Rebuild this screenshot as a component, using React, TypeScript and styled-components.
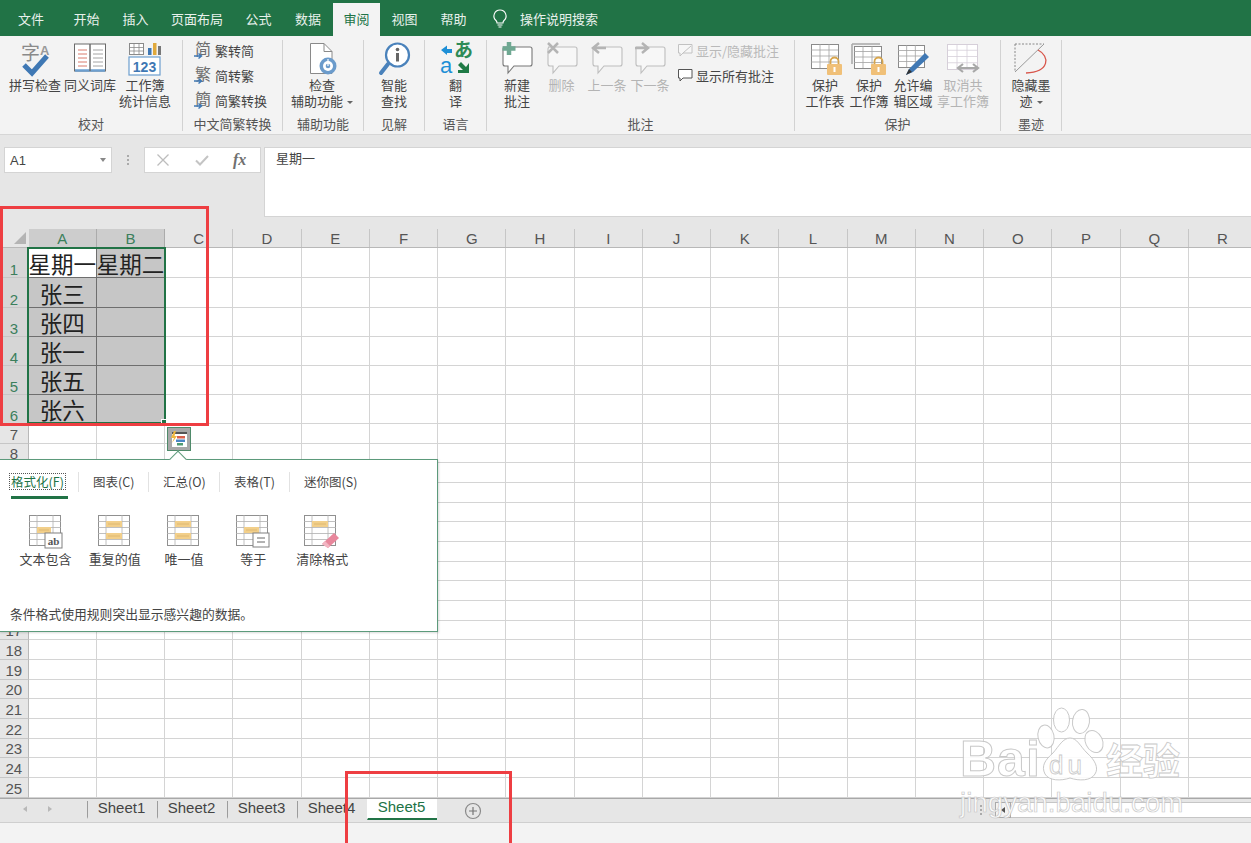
import React from 'react';
import styled, {createGlobalStyle} from 'styled-components';

const CJK = `"Noto Sans CJK SC", "Liberation Sans", sans-serif`;
const GREEN = '#217346';

const GlobalStyle = createGlobalStyle`
  html, body {
    margin: 0;
    padding: 0;
    background: #fff;
  }
  body {
    font-family: ${CJK};
    overflow: hidden;
  }
  svg {
    overflow: visible;
  }
`;

const Window = styled.div`
  position: relative;
  width: 1251px;
  height: 843px;
  overflow: hidden;
  display: flex;
  flex-direction: column;
`;

/* ---------- tabs ---------- */

const TabBar = styled.div`
  height: 36px;
  flex: none;
  background: ${GREEN};
  display: flex;
  align-items: flex-end;
  color: #fff;
  font-size: 13px;
`;

const MenuTab = styled.div<{$w: number; $active?: boolean}>`
  width: ${p => p.$w}px;
  height: 33px;
  flex: none;
  display: flex;
  align-items: center;
  justify-content: center;
  padding-bottom: 3px;
  box-sizing: border-box;
  background: ${p => (p.$active ? '#f3f3f3' : 'transparent')};
  color: ${p => (p.$active ? GREEN : '#e8f1ec')};
`;

const SearchHint = styled.div`
  margin-left: 15px;
  height: 33px;
  display: flex;
  align-items: center;
  gap: 13px;
  padding-bottom: 3px;
  box-sizing: border-box;
  color: #e8f1ec;
`;

/* ---------- ribbon ---------- */

const Ribbon = styled.div`
  height: 99px;
  flex: none;
  background: #f3f3f3;
  border-bottom: 1px solid #d6d6d6;
  box-sizing: border-box;
  display: flex;
  padding-top: 4px;
  color: #444;
  font-size: 13px;
`;

const Group = styled.div<{$w: number}>`
  width: ${p => p.$w}px;
  height: 91px;
  flex: none;
  box-sizing: border-box;
  border-right: 1px solid #d2d2d2;
  display: flex;
  flex-direction: column;
`;

const GroupBody = styled.div<{$pad?: number}>`
  height: 76px;
  flex: none;
  display: flex;
  padding-left: ${p => p.$pad || 0}px;
`;

const GroupLabel = styled.div`
  height: 15px;
  line-height: 16px;
  text-align: center;
  color: #555;
  font-size: 13px;
  white-space: nowrap;
`;

const BigButton = styled.div<{$w: number; $off?: boolean}>`
  width: ${p => p.$w}px;
  flex: none;
  display: flex;
  flex-direction: column;
  align-items: center;
  color: ${p => (p.$off ? '#b4b4b4' : '#444')};
`;

const BigIcon = styled.div`
  height: 37px;
  padding-top: 2px;
  box-sizing: border-box;
  display: flex;
  align-items: flex-start;
  justify-content: center;
`;

const BigText = styled.div`
  line-height: 16px;
  text-align: center;
  white-space: nowrap;
`;

const SmallStack = styled.div<{$w: number; $gap: number; $ml?: number}>`
  width: ${p => p.$w}px;
  flex: none;
  display: flex;
  flex-direction: column;
  gap: ${p => p.$gap}px;
  margin-left: ${p => p.$ml || 0}px;
`;

const SmallButton = styled.div<{$off?: boolean}>`
  display: flex;
  align-items: center;
  gap: 2px;
  height: 20px;
  white-space: nowrap;
  font-size: 13px;
  color: ${p => (p.$off ? '#b9b9b9' : '#444')};
`;

const Caret = styled.span`
  display: inline-block;
  width: 0;
  height: 0;
  margin-left: 4px;
  vertical-align: middle;
  border-left: 3px solid transparent;
  border-right: 3px solid transparent;
  border-top: 3px solid #666;
`;

/* ---------- formula bar ---------- */

const FormulaArea = styled.div`
  height: 94px;
  flex: none;
  box-sizing: border-box;
  background: #e6e6e6;
  padding: 12px 0 12px 4px;
  display: flex;
  align-items: flex-start;
`;

const NameBox = styled.div`
  width: 108px;
  height: 26px;
  flex: none;
  box-sizing: border-box;
  background: #fff;
  border: 1px solid #d4d4d4;
  display: flex;
  align-items: center;
  justify-content: space-between;
  padding: 0 5px;
  font-family: "Liberation Sans", sans-serif;
  font-size: 13px;
  color: #444;
`;

const DownArrow = styled.span`
  width: 0;
  height: 0;
  border-left: 3px solid transparent;
  border-right: 3px solid transparent;
  border-top: 4px solid #888;
`;

const Grip = styled.div<{$w: number}>`
  width: ${p => p.$w}px;
  height: 26px;
  flex: none;
  display: flex;
  flex-direction: column;
  align-items: center;
  justify-content: center;
  gap: 2px;
`;

const GripDot = styled.i`
  width: 2px;
  height: 2px;
  background: #aaa;
`;

const FnBox = styled.div`
  width: 117px;
  height: 26px;
  flex: none;
  box-sizing: border-box;
  background: #fff;
  border: 1px solid #d4d4d4;
  display: flex;
  align-items: center;
  gap: 23px;
  padding-left: 10px;
`;

const Fx = styled.span`
  font-family: "Liberation Serif", serif;
  font-style: italic;
  font-weight: bold;
  font-size: 16px;
  color: #707070;
`;

const FormulaInput = styled.div`
  margin-left: 3px;
  flex: 1;
  height: 70px;
  box-sizing: border-box;
  background: #fff;
  border-left: 1px solid #d4d4d4;
  border-top: 1px solid #d4d4d4;
  border-bottom: 1px solid #d4d4d4;
  padding: 0 11px;
  font-size: 13px;
  line-height: 20px;
  color: #444;
`;

/* ---------- sheet ---------- */

const Sheet = styled.div`
  position: relative;
  height: 569px;
  flex: none;
  overflow: hidden;
  background: #fff;
`;

const HeaderRow = styled.div`
  height: 19px;
  display: flex;
  background: #e6e6e6;
  border-bottom: 1px solid #b8b8b8;
  box-sizing: border-box;
`;

const Corner = styled.div`
  width: 28.6px;
  flex: none;
  position: relative;
  box-sizing: border-box;
  &::after {
    content: '';
    position: absolute;
    right: 3px;
    bottom: 3px;
    width: 0;
    height: 0;
    border-left: 12px solid transparent;
    border-bottom: 12px solid #b4b4b4;
  }
`;

const ColHead = styled.div<{$sel?: boolean}>`
  width: 68.25px;
  flex: none;
  box-sizing: border-box;
  display: flex;
  align-items: center;
  justify-content: center;
  font-family: "Liberation Sans", sans-serif;
  font-size: 15px;
  color: ${p => (p.$sel ? '#3b7f5c' : '#555')};
  background: ${p => (p.$sel ? '#cdcdcd' : 'transparent')};
  border-right: 1px solid ${p => (p.$sel ? '#ababab' : '#c6c6c6')};
`;

const Row = styled.div<{$h: number}>`
  height: ${p => p.$h}px;
  display: flex;
`;

const RowHead = styled.div<{$sel?: boolean}>`
  width: 28.6px;
  flex: none;
  box-sizing: border-box;
  display: flex;
  align-items: flex-end;
  justify-content: center;
  font-family: "Liberation Sans", sans-serif;
  font-size: 15px;
  line-height: ${p => (p.$sel ? 15 : 17)}px;
  color: ${p => (p.$sel ? '#3b7f5c' : '#555')};
  background: ${p => (p.$sel ? '#d6d6d6' : '#e6e6e6')};
  border-bottom: 1px solid #c6c6c6;
  border-right: 1px solid #b8b8b8;
`;

const Cell = styled.div<{$sel?: boolean; $anchor?: boolean}>`
  width: 68.25px;
  flex: none;
  box-sizing: border-box;
  display: flex;
  align-items: center;
  justify-content: center;
  overflow: visible;
  white-space: nowrap;
  font-size: 22.5px;
  line-height: 26px;
  color: #222;
  background: ${p => (p.$anchor ? '#fff' : p.$sel ? '#c6c6c6' : '#fff')};
  border-right: 1px solid ${p => (p.$sel ? '#6e6e6e' : '#d4d4d4')};
  border-bottom: 1px solid ${p => (p.$sel ? '#6e6e6e' : '#d4d4d4')};
`;

const SelectionFrame = styled.div`
  position: absolute;
  left: 27px;
  top: 18px;
  width: 139px;
  height: 177px;
  box-sizing: border-box;
  border: 2px solid ${GREEN};
  pointer-events: none;
  &::after {
    content: '';
    position: absolute;
    right: -3px;
    bottom: -3px;
    width: 4px;
    height: 4px;
    background: ${GREEN};
    border: 1px solid #fff;
  }
`;

const QuickButton = styled.div`
  position: absolute;
  left: 167px;
  top: 198px;
  width: 24px;
  height: 24px;
  box-sizing: border-box;
  background: #a8a8a8;
  border: 1px solid #4f8a6a;
  display: flex;
  align-items: center;
  justify-content: center;
`;

/* ---------- quick analysis ---------- */

const Popup = styled.div`
  position: absolute;
  left: -1px;
  top: 230px;
  width: 439px;
  height: 173px;
  box-sizing: border-box;
  background: #fff;
  border: 1px solid #5c9a7b;
  box-shadow: 1px 1px 2px rgba(0, 0, 0, 0.15);
  padding: 9px 0 0 11px;
  color: #444;
  font-size: 12.5px;
  &::before {
    content: '';
    position: absolute;
    left: 172px;
    top: -7px;
    width: 11px;
    height: 11px;
    background: #fff;
    border-left: 1px solid #5c9a7b;
    border-top: 1px solid #5c9a7b;
    transform: rotate(45deg);
  }
`;

const PopTabs = styled.div`
  display: flex;
  height: 27px;
`;

const PopTab = styled.div<{$w: number; $active?: boolean}>`
  width: ${p => p.$w}px;
  flex: none;
  box-sizing: border-box;
  height: 24px;
  display: flex;
  align-items: center;
  position: relative;
  white-space: nowrap;
  color: ${p => (p.$active ? GREEN : '#444')};
  &:not(:first-child)::before {
    content: '';
    position: absolute;
    left: -15px;
    top: 3px;
    bottom: 1px;
    width: 1px;
    background: #e2e2e2;
  }
`;

const FocusLabel = styled.span`
  outline: 1px dotted #555;
  line-height: 15px;
  padding: 0 1px;
  margin-left: -1px;
`;

const ActiveBar = styled.div`
  width: 57px;
  height: 3px;
  background: ${GREEN};
`;

const PopItems = styled.div`
  display: flex;
  margin-top: 16px;
  height: 62px;
`;

const PopItem = styled.div`
  width: 69.2px;
  flex: none;
  display: flex;
  flex-direction: column;
  align-items: center;
  white-space: nowrap;
  line-height: 16px;
  font-size: 13px;
  gap: 2px;
`;

const PopNote = styled.div`
  position: absolute;
  left: 10px;
  top: 145px;
  line-height: 18px;
  font-size: 12.8px;
  white-space: nowrap;
`;

/* ---------- sheet tabs and status ---------- */

const TabsBar = styled.div`
  height: 25px;
  flex: none;
  box-sizing: border-box;
  background: #e6e6e6;
  border-top: 1px solid #a8a8a8;
  border-bottom: 1px solid #cfcfcf;
  display: flex;
  align-items: flex-start;
  font-family: "Liberation Sans", sans-serif;
  font-size: 15px;
  color: #444;
`;

const NavArrows = styled.div`
  width: 87px;
  height: 20px;
  flex: none;
  display: flex;
  align-items: center;
  gap: 21px;
  padding-left: 23px;
  box-sizing: border-box;
`;

const NavArrow = styled.span<{$flip?: boolean; $dark?: boolean}>`
  width: 0;
  height: 0;
  border-top: 3.5px solid transparent;
  border-bottom: 3.5px solid transparent;
  ${p => (p.$flip ? 'border-left: 4px solid #b8b8b8;' : `border-right: 4px solid ${p.$dark ? '#555' : '#b8b8b8'};`)}
`;

const SheetTab = styled.div<{$active?: boolean}>`
  width: 70px;
  flex: none;
  box-sizing: border-box;
  display: flex;
  align-items: center;
  justify-content: center;
  padding: 0 2px 4px 0;
  background: ${p => (p.$active ? '#fff' : 'transparent')};
  color: ${p => (p.$active ? GREEN : '#444')};
  border-left: 1px solid ${p => (p.$active ? 'transparent' : '#9c9c9c')};
  border-bottom: 2px solid ${p => (p.$active ? GREEN : 'transparent')};
  height: ${p => (p.$active ? 21 : 18)}px;
  margin-top: ${p => (p.$active ? 0 : 2)}px;
`;

const AddSheet = styled.div`
  margin-left: 27px;
  margin-top: 3px;
  flex: none;
  display: flex;
`;

const TabsRight = styled.div`
  margin-left: auto;
  display: flex;
  align-items: center;
  height: 21px;
`;

const ScrollStart = styled.div`
  margin-left: 12px;
  width: 16px;
  height: 16px;
  box-sizing: border-box;
  background: #f3f3f3;
  border: 1px solid #aaa;
  display: flex;
  align-items: center;
  justify-content: center;
`;

const ScrollTrack = styled.div`
  width: 240px;
  height: 16px;
  box-sizing: border-box;
  background: #fff;
  border-top: 1px solid #c6c6c6;
  border-bottom: 1px solid #c6c6c6;
`;

const StatusBar = styled.div`
  height: 20px;
  flex: none;
  background: #f3f3f3;
`;

/* ---------- overlays ---------- */

const RedBox = styled.div<{$x: number; $y: number; $w: number; $h: number}>`
  position: absolute;
  left: ${p => p.$x}px;
  top: ${p => p.$y}px;
  width: ${p => p.$w}px;
  height: ${p => p.$h}px;
  box-sizing: border-box;
  border: 3px solid #ee3e42;
  pointer-events: none;
`;

const Watermark = styled.div`
  position: absolute;
  left: 960px;
  top: 708px;
  width: 225px;
  height: 108px;
  pointer-events: none;
  color: #fff;
  opacity: 0.9;
  font-family: "Liberation Sans", sans-serif;
`;

const WmBai = styled.span`
  position: absolute;
  left: 0;
  top: 26px;
  font-size: 50px;
  line-height: 50px;
  font-weight: bold;
  letter-spacing: 1px;
  -webkit-text-stroke: 1px #c4c4c4;
`;

const WmDu = styled.span`
  position: absolute;
  left: 89px;
  top: 44px;
  font-size: 26px;
  line-height: 26px;
  letter-spacing: 4px;
  color: #fff;
  -webkit-text-stroke: 0.8px #c4c4c4;
`;

const WmJy = styled.span`
  position: absolute;
  left: 146px;
  top: 29px;
  font-family: ${CJK};
  font-size: 37px;
  line-height: 44px;
  font-weight: bold;
  -webkit-text-stroke: 0.8px #c4c4c4;
`;

const WmUrl = styled.span`
  position: absolute;
  left: 0;
  top: 80px;
  font-size: 27.5px;
  line-height: 30px;
  letter-spacing: 0.1px;
  white-space: nowrap;
  -webkit-text-stroke: 0.7px #c4c4c4;
`;

const WmPaw = styled.svg`
  position: absolute;
  left: 75px;
  top: 0;
`;

/* ---------- icons ---------- */

const SpellIcon = () => (
  <svg width="34" height="34" viewBox="0 0 34 34">
    <text x="3" y="18" fontSize="19" fill="#8a8a8a" fontFamily={CJK}>字</text>
    <text x="22" y="13" fontSize="13" fontWeight="bold" fill="#9a9a9a" fontFamily="Liberation Sans">A</text>
    <path d="M6 23 L14 31 L29 14" fill="none" stroke="#3f78b4" strokeWidth="5" />
  </svg>
);

const BookIcon = () => (
  <svg width="34" height="32" viewBox="0 0 34 32">
    <rect x="1.5" y="2" width="31" height="27" fill="#fff" stroke="#6a6a6a" />
    <path d="M2 28.5 H32" stroke="#6d9fcf" strokeWidth="2.5" />
    <path d="M17 2 V29" stroke="#6d6d6d" strokeWidth="1.5" />
    <path d="M5 8 H14 M5 12 H14 M5 16 H14 M5 20 H14 M5 24 H14" stroke="#d97a6c" strokeWidth="1" />
    <path d="M20 8 H30 M20 12 H30 M20 16 H30 M20 20 H30 M20 24 H30" stroke="#a4a4a4" strokeWidth="1" />
  </svg>
);

const StatsIcon = () => (
  <svg width="34" height="34" viewBox="0 0 34 34">
    <rect x="1.5" y="1.5" width="14" height="11" fill="#fff" stroke="#8a8a8a" />
    <path d="M1.5 5.5 H15.5 M1.5 9 H15.5 M6 1.5 V12.5 M11 1.5 V12.5" stroke="#8a8a8a" strokeWidth="0.8" />
    <rect x="20" y="6" width="3.5" height="7" fill="#3f78b4" />
    <rect x="25" y="1" width="3.5" height="12" fill="#e0a93c" />
    <rect x="30" y="4" width="3" height="9" fill="#777" />
    <rect x="1" y="15" width="31" height="18" fill="#fff" stroke="#6d9fcf" strokeWidth="1.2" />
    <text x="16.5" y="29.5" fontSize="14" fontWeight="bold" textAnchor="middle" fill="#3f78b4" fontFamily="Liberation Sans">123</text>
  </svg>
);

const ConvertGlyph = ({ch}: {ch: string}) => (
  <svg width="20" height="22" viewBox="0 0 20 22">
    <text x="2" y="16" fontSize="16" fill="#6e6e6e" fontFamily={CJK}>{ch}</text>
    <path d="M1 17 H8 M5.5 14.5 L8.5 17 L5.5 19.5" fill="none" stroke="#3f78b4" strokeWidth="1.5" />
  </svg>
);

const AccessIcon = () => (
  <svg width="30" height="35" viewBox="0 0 30 35">
    <path d="M3.5 1.5 H17 L25 9.5 V31.5 H3.5 Z" fill="#fff" stroke="#8a8a8a" />
    <path d="M17 1.5 V9.5 H25" fill="none" stroke="#8a8a8a" />
    <circle cx="21" cy="24" r="8.5" fill="#6b9bcb" />
    <circle cx="21" cy="24" r="5" fill="#fff" />
    <circle cx="21" cy="24" r="2.3" fill="#6b9bcb" />
    <path d="M21 17 V24" stroke="#fff" strokeWidth="1.2" />
  </svg>
);

const SmartIcon = () => (
  <svg width="34" height="34" viewBox="0 0 34 34">
    <circle cx="20.5" cy="13" r="11.5" fill="#fff" stroke="#4a82bb" strokeWidth="2.2" />
    <path d="M11 22 L4 31" stroke="#4a82bb" strokeWidth="4" strokeLinecap="round" />
    <circle cx="20.5" cy="7.5" r="1.8" fill="#666" />
    <path d="M20.5 11 V19.5" stroke="#666" strokeWidth="3" />
  </svg>
);

const TranslateIcon = () => (
  <svg width="32" height="34" viewBox="0 0 32 34">
    <path d="M1 8 L7 3.5 L7 7 L12 7 L12 11 L7 11 L7 13 L1 8 Z" fill="#1e8fd6" />
    <text x="14" y="15" fontSize="19" fontWeight="bold" fill="#2e8b57" fontFamily={CJK}>あ</text>
    <text x="0" y="31" fontSize="22" fill="#1e8fd6" fontFamily="Liberation Sans">a</text>
    <path d="M29 31 L18 31 L18 28 L23 28 L18 23 L21 20 L26 25 L29 21 Z" fill="#1f7a45" />
  </svg>
);

const Bubble = ({dim, children}: {dim?: boolean; children?: React.ReactNode}) => {
  const c = dim ? '#bdbdbd' : '#777';
  return (
    <svg width="34" height="34" viewBox="0 0 34 34">
      <path d="M3 5 H30 Q32 5 32 7 V22 Q32 24 30 24 H14 L8 31 V24 H5 Q3 24 3 22 V7 Q3 5 5 5 Z" fill={dim ? '#f7f7f7' : '#fff'} stroke={c} strokeWidth="1.1" />
      {children}
    </svg>
  );
};

const SmallBubble = ({dim}: {dim?: boolean}) => (
  <svg width="17" height="16" viewBox="0 0 17 16">
    <path d="M1.5 2.5 H15 V11 H6 L3 14 V11 H1.5 Z" fill={dim ? '#f7f7f7' : '#fff'} stroke={dim ? '#c2c2c2' : '#555'} />
    {dim && <path d="M6 11 L14 4" stroke="#c2c2c2" />}
  </svg>
);

const GridSheet = ({w, h, dim}: {w: number; h: number; dim?: boolean}) => {
  const c = dim ? '#d6cfd9' : '#a2a2a2';
  const lines = [];
  for (let x = w / 3; x < w - 1; x += w / 3) lines.push(`M${x} 0 V${h}`);
  for (let y = h / 4; y < h - 1; y += h / 4) lines.push(`M0 ${y} H${w}`);
  return (
    <g>
      <rect x="0.5" y="0.5" width={w} height={h} fill="#fff" stroke={dim ? c : '#8a8a8a'} />
      <path d={lines.join(' ')} stroke={c} strokeWidth="0.8" fill="none" />
    </g>
  );
};

const Lock = ({x, y}: {x: number; y: number}) => (
  <g transform={`translate(${x} ${y})`}>
    <path d="M3.5 7 V4.5 A4 4 0 0 1 11.5 4.5 V7" fill="none" stroke="#d8a64e" strokeWidth="1.8" />
    <rect x="0" y="7" width="15" height="11" rx="1" fill="#f0c078" />
    <rect x="6.5" y="10" width="2" height="5" fill="#fff" />
  </g>
);

const ProtectSheetIcon = () => (
  <svg width="36" height="34" viewBox="0 0 36 34">
    <g transform="translate(4 2)"><GridSheet w={27} h={24} /></g>
    <Lock x={20} y={15} />
  </svg>
);

const ProtectBookIcon = () => (
  <svg width="36" height="34" viewBox="0 0 36 34">
    <path d="M1 2 H29 M1 2 V22" stroke="#a8a8a8" strokeWidth="1.5" fill="none" />
    <g transform="translate(3 4)"><GridSheet w={27} h={22} /></g>
    <Lock x={20} y={15} />
  </svg>
);

const AllowEditIcon = () => (
  <svg width="36" height="34" viewBox="0 0 36 34">
    <g transform="translate(3 3)"><GridSheet w={26} h={22} /></g>
    <path d="M11 33 L14 27 L30 11 L34 15 L18 30 Z" fill="#3f78b4" />
    <path d="M11 33 L14 27 L17 30 Z" fill="#333" />
  </svg>
);

const UnshareIcon = () => (
  <svg width="36" height="34" viewBox="0 0 36 34">
    <g transform="translate(2 2)"><GridSheet w={30} h={25} dim /></g>
    <path d="M13 26 H33 M18 22 L13 26 L18 30 M28 22 L33 26 L28 30" fill="none" stroke="#a8a8a8" strokeWidth="2.2" />
  </svg>
);

const InkIcon = () => (
  <svg width="34" height="34" viewBox="0 0 34 34">
    <path d="M1 2 H30 M1 2 V30" stroke="#888" strokeDasharray="2 1.5" fill="none" />
    <path d="M1 30 L30 2" stroke="#999" strokeWidth="1" />
    <path d="M24 8 C36 14 36 30 12 31" fill="none" stroke="#d8554a" strokeWidth="1.3" />
  </svg>
);

const CloseGlyph = () => (
  <svg width="16" height="16" viewBox="0 0 16 16">
    <path d="M2.5 2.5 L13.5 13.5 M13.5 2.5 L2.5 13.5" stroke="#bdbdbd" strokeWidth="1.3" />
  </svg>
);

const CheckGlyph = () => (
  <svg width="16" height="16" viewBox="0 0 16 16">
    <path d="M2 8.5 L6 12.5 L14 4" fill="none" stroke="#c4c4c4" strokeWidth="2" />
  </svg>
);

const Bulb = () => (
  <svg width="14" height="19" viewBox="0 0 14 19">
    <path d="M7 1 A6 6 0 0 1 11 11.5 C10 12.5 10 13 10 14 H4 C4 13 4 12.5 3 11.5 A6 6 0 0 1 7 1 Z" fill="none" stroke="#fff" strokeWidth="1.1" />
    <path d="M4.5 16 H9.5 M5.5 18 H8.5" stroke="#fff" strokeWidth="1.1" />
  </svg>
);

const QuickIcon = () => (
  <svg width="18" height="18" viewBox="0 0 18 18">
    <rect x="2" y="2" width="15" height="15" fill="#fff" />
    <rect x="2" y="2" width="15" height="2" fill="#555" />
    <path d="M4 1 L1 8 H4 L2 13 L7 6 H4.5 L6 1 Z" fill="#f0b840" />
    <rect x="7" y="6" width="8" height="2.5" fill="#d9604c" />
    <rect x="6" y="9.5" width="9" height="2.5" fill="#4a86c5" />
    <rect x="7" y="13" width="6" height="2.5" fill="#4f9a72" />
  </svg>
);

const TableBase = ({marks}: {marks: number[][]}) => (
  <g>
    <rect x="0.5" y="0.5" width="31" height="30" fill="#fff" stroke="#909090" />
    <path d="M8 0 V31 M24 0 V31 M0 6.5 H32 M0 12.5 H32 M0 18.5 H32 M0 24.5 H32" stroke="#b0b0b0" strokeWidth="0.8" />
    {marks.map((m, i) => (
      <g key={i}>
        <rect x={m[0]} y={m[1]} width={m[2]} height={m[3]} fill="#f2cf8a" />
        <path d={`M${m[0] + 2} ${m[1] + 3} H${m[0] + m[2] - 2}`} stroke="#d9b36a" strokeWidth="0.8" />
      </g>
    ))}
  </g>
);

const TextContainsIcon = () => (
  <svg width="34" height="34" viewBox="0 0 34 34">
    <TableBase marks={[[8, 12, 14, 6]]} />
    <rect x="16" y="18" width="17" height="15" fill="#fff" stroke="#808080" />
    <text x="24.5" y="30" fontSize="11" fontWeight="bold" textAnchor="middle" fill="#555" fontFamily="Liberation Serif">ab</text>
  </svg>
);

const DuplicateIcon = () => (
  <svg width="34" height="34" viewBox="0 0 34 34">
    <TableBase marks={[[8, 6, 16, 6], [8, 18, 16, 6]]} />
  </svg>
);

const EqualsIcon = () => (
  <svg width="34" height="34" viewBox="0 0 34 34">
    <TableBase marks={[[8, 12, 15, 6]]} />
    <rect x="17" y="18" width="16" height="14" fill="#fff" stroke="#808080" />
    <path d="M21 23 H29 M21 27 H29" stroke="#666" strokeWidth="1" />
  </svg>
);

const ClearIcon = () => (
  <svg width="36" height="34" viewBox="0 0 36 34">
    <TableBase marks={[[8, 6, 16, 6]]} />
    <path d="M18 29 L30 18 L35 23 L24 33 Z" fill="#e8879c" />
    <path d="M18 29 L21 26 L26 31 L24 33 Z" fill="#f2b5c2" />
  </svg>
);

const PlusCircle = () => (
  <svg width="18" height="18" viewBox="0 0 18 18">
    <circle cx="9" cy="9" r="7.5" fill="none" stroke="#8a8a8a" strokeWidth="1.2" />
    <path d="M9 5 V13 M5 9 H13" stroke="#777" strokeWidth="1.2" />
  </svg>
);

const Paw = () => (
  <WmPaw width="74" height="76" viewBox="0 0 74 76">
    <g fill="#fff" stroke="#c4c4c4" strokeWidth="1">
      <ellipse cx="11" cy="28.5" rx="8" ry="11.5" transform="rotate(-12 11 28.5)" />
      <ellipse cx="26.5" cy="12" rx="8" ry="12" />
      <ellipse cx="46" cy="13.5" rx="8.5" ry="12" transform="rotate(8 46 13.5)" />
      <ellipse cx="59" cy="33.5" rx="8.5" ry="11.5" transform="rotate(-25 59 33.5)" />
      <path d="M35 30 C42 30 45 38 52 45 C60 52 64 60 60 66 C56 73 44 73 35 70 C26 73 14 73 10 66 C6 58 10 52 18 45 C24 38 28 30 35 30 Z" />
    </g>
  </WmPaw>
);

/* ---------- data ---------- */

const MENU: [string, number][] = [
  ['文件', 62], ['开始', 49], ['插入', 49], ['页面布局', 74], ['公式', 49], ['数据', 50],
];

const COLS = 'ABCDEFGHIJKLMNOPQR'.split('');

const FILLED: [string, string][] = [
  ['星期一', '星期二'], ['张三', ''], ['张四', ''], ['张一', ''], ['张五', ''], ['张六', ''],
];

const TOP_HEIGHTS = [30, 30, 29, 29, 29, 29];

const POP_TABS: [string, number][] = [['图表(C)', 70], ['汇总(O)', 71], ['表格(T)', 70], ['迷你图(S)', 70]];

function App() {
  const rows = [];
  for (let r = 0; r < 25; r++) {
    const sel = r < 6;
    // rows 9 to 16 sit behind the quick analysis popup
    const hidden = r >= 8 && r <= 15;
    rows.push(
      <Row key={r} $h={sel ? TOP_HEIGHTS[r] : 19.68}>
        <RowHead $sel={sel}>{hidden ? '' : r + 1}</RowHead>
        {COLS.map((c, i) => (
          <Cell key={c} $sel={sel && i < 2} $anchor={r === 0 && i === 0}>
            {sel && i < 2 ? FILLED[r][i] : ''}
          </Cell>
        ))}
      </Row>
    );
  }

  return (
    <Window>
      <GlobalStyle />
      <TabBar>
        {MENU.map(([t, w]) => <MenuTab key={t} $w={w}>{t}</MenuTab>)}
        <MenuTab $w={47} $active>审阅</MenuTab>
        <MenuTab $w={49}>视图</MenuTab>
        <MenuTab $w={49}>帮助</MenuTab>
        <SearchHint>
          <Bulb />
          操作说明搜索
        </SearchHint>
      </TabBar>

      <Ribbon>
        <Group $w={183}>
          <GroupBody $pad={8}>
            <BigButton $w={54}><BigIcon><SpellIcon /></BigIcon><BigText>拼写检查</BigText></BigButton>
            <BigButton $w={56}><BigIcon><BookIcon /></BigIcon><BigText>同义词库</BigText></BigButton>
            <BigButton $w={54}><BigIcon><StatsIcon /></BigIcon><BigText>工作簿<br />统计信息</BigText></BigButton>
          </GroupBody>
          <GroupLabel>校对</GroupLabel>
        </Group>
        <Group $w={100}>
          <GroupBody $pad={10}>
            <SmallStack $w={86} $gap={5}>
              <SmallButton><ConvertGlyph ch="简" />繁转简</SmallButton>
              <SmallButton><ConvertGlyph ch="繁" />简转繁</SmallButton>
              <SmallButton><ConvertGlyph ch="簡" />简繁转换</SmallButton>
            </SmallStack>
          </GroupBody>
          <GroupLabel>中文简繁转换</GroupLabel>
        </Group>
        <Group $w={81}>
          <GroupBody>
            <BigButton $w={78}><BigIcon><AccessIcon /></BigIcon><BigText>检查<br />辅助功能<Caret /></BigText></BigButton>
          </GroupBody>
          <GroupLabel>辅助功能</GroupLabel>
        </Group>
        <Group $w={61}>
          <GroupBody>
            <BigButton $w={60}><BigIcon><SmartIcon /></BigIcon><BigText>智能<br />查找</BigText></BigButton>
          </GroupBody>
          <GroupLabel>见解</GroupLabel>
        </Group>
        <Group $w={62}>
          <GroupBody>
            <BigButton $w={61}><BigIcon><TranslateIcon /></BigIcon><BigText>翻<br />译</BigText></BigButton>
          </GroupBody>
          <GroupLabel>语言</GroupLabel>
        </Group>
        <Group $w={308}>
          <GroupBody $pad={8}>
            <BigButton $w={44}>
              <BigIcon>
                <Bubble>
                  <path d="M9 0 V13 M2.5 6.5 H15.5" stroke="#6fa892" strokeWidth="4.5" />
                </Bubble>
              </BigIcon>
              <BigText>新建<br />批注</BigText>
            </BigButton>
            <BigButton $w={45} $off>
              <BigIcon>
                <Bubble dim>
                  <path d="M3 1 L13 11 M13 1 L3 11" stroke="#b4b4b4" strokeWidth="2.5" />
                </Bubble>
              </BigIcon>
              <BigText>删除</BigText>
            </BigButton>
            <BigButton $w={46} $off>
              <BigIcon>
                <Bubble dim>
                  <path d="M16 6 H4 M9 1 L3 6 L9 11" fill="none" stroke="#b4b4b4" strokeWidth="2.5" />
                </Bubble>
              </BigIcon>
              <BigText>上一条</BigText>
            </BigButton>
            <BigButton $w={40} $off>
              <BigIcon>
                <Bubble dim>
                  <path d="M2 6 H14 M9 1 L15 6 L9 11" fill="none" stroke="#b4b4b4" strokeWidth="2.5" />
                </Bubble>
              </BigIcon>
              <BigText>下一条</BigText>
            </BigButton>
            <SmallStack $w={110} $gap={5} $ml={7}>
              <SmallButton $off><SmallBubble dim />显示/隐藏批注</SmallButton>
              <SmallButton><SmallBubble />显示所有批注</SmallButton>
            </SmallStack>
          </GroupBody>
          <GroupLabel>批注</GroupLabel>
        </Group>
        <Group $w={206}>
          <GroupBody $pad={8}>
            <BigButton $w={44}><BigIcon><ProtectSheetIcon /></BigIcon><BigText>保护<br />工作表</BigText></BigButton>
            <BigButton $w={44}><BigIcon><ProtectBookIcon /></BigIcon><BigText>保护<br />工作簿</BigText></BigButton>
            <BigButton $w={44}><BigIcon><AllowEditIcon /></BigIcon><BigText>允许编<br />辑区域</BigText></BigButton>
            <BigButton $w={56} $off><BigIcon><UnshareIcon /></BigIcon><BigText>取消共<br />享工作簿</BigText></BigButton>
          </GroupBody>
          <GroupLabel>保护</GroupLabel>
        </Group>
        <Group $w={61}>
          <GroupBody>
            <BigButton $w={60}><BigIcon><InkIcon /></BigIcon><BigText>隐藏墨<br />迹<Caret /></BigText></BigButton>
          </GroupBody>
          <GroupLabel>墨迹</GroupLabel>
        </Group>
      </Ribbon>

      <FormulaArea>
        <NameBox>A1<DownArrow /></NameBox>
        <Grip $w={32}><GripDot /><GripDot /><GripDot /></Grip>
        <FnBox><CloseGlyph /><CheckGlyph /><Fx>fx</Fx></FnBox>
        <FormulaInput>星期一</FormulaInput>
      </FormulaArea>

      <Sheet>
        <HeaderRow>
          <Corner />
          {COLS.map((c, i) => <ColHead key={c} $sel={i < 2}>{c}</ColHead>)}
        </HeaderRow>
        {rows}
        <SelectionFrame />
        <QuickButton><QuickIcon /></QuickButton>
        <Popup>
          <PopTabs>
            <PopTab $w={82} $active><FocusLabel>格式化(F)</FocusLabel></PopTab>
            {POP_TABS.map(([t, w]) => <PopTab key={t} $w={w}>{t}</PopTab>)}
          </PopTabs>
          <ActiveBar />
          <PopItems>
            <PopItem><TextContainsIcon />文本包含</PopItem>
            <PopItem><DuplicateIcon />重复的值</PopItem>
            <PopItem><DuplicateIcon />唯一值</PopItem>
            <PopItem><EqualsIcon />等于</PopItem>
            <PopItem><ClearIcon />清除格式</PopItem>
          </PopItems>
          <PopNote>条件格式使用规则突出显示感兴趣的数据。</PopNote>
        </Popup>
      </Sheet>

      <TabsBar>
        <NavArrows><NavArrow /><NavArrow $flip /></NavArrows>
        <SheetTab>Sheet1</SheetTab>
        <SheetTab>Sheet2</SheetTab>
        <SheetTab>Sheet3</SheetTab>
        <SheetTab>Sheet4</SheetTab>
        <SheetTab $active>Sheet5</SheetTab>
        <AddSheet><PlusCircle /></AddSheet>
        <TabsRight>
          <Grip $w={4}><GripDot /><GripDot /><GripDot /></Grip>
          <ScrollStart><NavArrow $dark /></ScrollStart>
          <ScrollTrack />
        </TabsRight>
      </TabsBar>
      <StatusBar />

      <RedBox $x={0} $y={206} $w={209} $h={220} />
      <RedBox $x={345} $y={771} $w={167} $h={80} />
      <Watermark>
        <WmBai>Bai</WmBai>
        <Paw />
        <WmDu>du</WmDu>
        <WmJy>经验</WmJy>
        <WmUrl>jingyan.baidu.com</WmUrl>
      </Watermark>
    </Window>
  );
}

export default App;
